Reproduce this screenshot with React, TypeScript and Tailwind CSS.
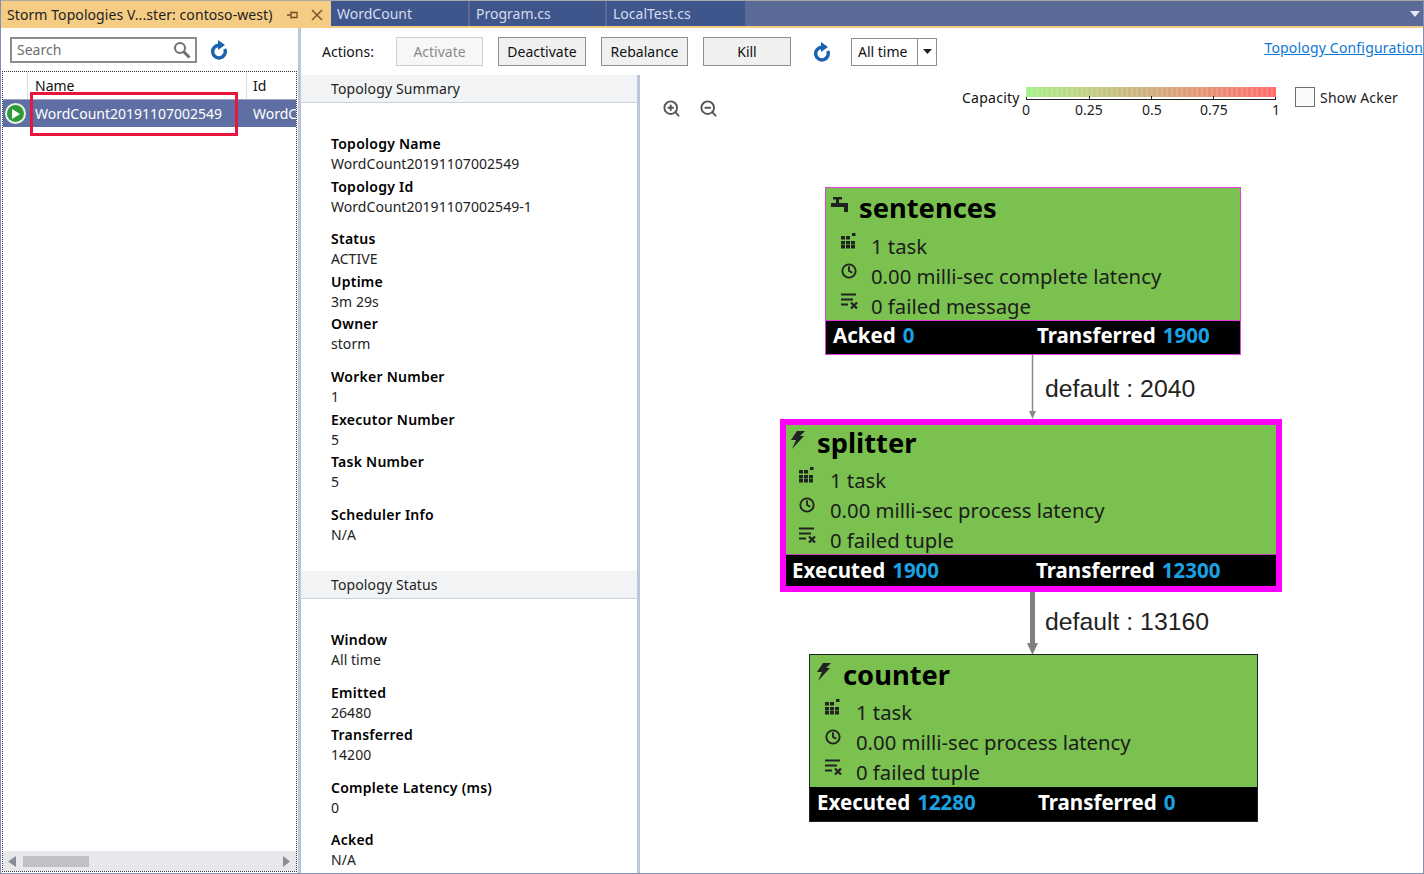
import React from "react";
import { Clock, ZoomIn, ZoomOut } from "lucide-react";

const Field = ({ label, value }: { label: string; value: string }) => (
  <div className="h-[42.6px] leading-5">
    <div className="font-semibold text-black tracking-[0.25px]">{label}</div>
    <div className="text-[#222] tracking-[0.05px]">{value}</div>
  </div>
);

const Group = ({ items }: { items: [string, string][] }) => (
  <div className="mb-[10px]">
    {items.map(([l, v]) => (
      <Field key={l} label={l} value={v} />
    ))}
  </div>
);

const SectionHead = ({ children }: { children: React.ReactNode }) => (
  <div className="h-[28px] pl-[30px] flex items-center bg-[#f2f3f5] border-b border-[#ccd2dc] text-[#222] tracking-[0.12px]">{children}</div>
);

const Faucet = () => (
  <svg width="18" height="15" viewBox="0 0 18 15" fill="#222" className="-mt-[7px]">
    <path d="M2 0h9v2.500H8V6h9v9h-4v-5H0V6h5V2.500H2z" />
  </svg>
);

const Bolt = () => (
  <svg width="14" height="18" viewBox="0 0 14 18" fill="#222" className="-mt-[7px]">
    <path d="M6 0h8L9 5h4L1 18l4-9H0z" />
  </svg>
);

const Tasks = () => (
  <svg width="15" height="16" viewBox="0 0 15 16" fill="#222">
    {[3, 8, 12].flatMap((y) =>
      [0, 5, 10].map((x) => (y === 3 && x === 10 ? null : <rect key={`${x}-${y}`} x={x} y={y} width="4" height="3.500" />)),
    )}
    <rect x="11" y="0" width="3.500" height="3" />
  </svg>
);

const FailIcon = () => (
  <svg width="18" height="16" viewBox="0 0 18 16" stroke="#222" strokeWidth="2" fill="none">
    <path d="M0 1.500h15M0 6.500h12M0 11.500h7" />
    <path d="M10 9.500l6 6M16 9.500l-6 6" strokeWidth="2.200" />
  </svg>
);

const Refresh = ({ className }: { className?: string }) => (
  <svg width="18" height="20" viewBox="0 0 18 20" fill="none" className={className}>
    <path d="M9 5.300A6.300 6.300 0 1 0 14.700 9" stroke="#1b62ad" strokeWidth="3.400" />
    <path d="M8 0l7 5-7 5z" fill="#1b62ad" />
  </svg>
);

type NodeProps = {
  box: string;
  inner: string;
  iconX: string;
  lineMt: string;
  indent: string;
  title: string;
  titleIcon: React.ReactNode;
  lines: string[];
  bar: string;
  leftLabel: string;
  leftValue: string;
  rightValue: string;
  leftW: string;
};

const GraphNode = ({ box, inner, iconX, lineMt, indent, title, titleIcon, lines, bar, leftLabel, leftValue, rightValue, leftW }: NodeProps) => (
  <div className={`absolute flex flex-col ${box}`}>
    <div className="flex-1 bg-[#7ac14f] relative min-h-0">
      <div className={inner}>
        <div className="flex items-center h-[36px]">
          <span className={`${iconX} flex`}>{titleIcon}</span>
          <span className="text-[27.300px] font-bold text-black leading-none">{title}</span>
        </div>
        <div className={`${lineMt} flex flex-col`}>
          {lines.map((t, i) => (
            <div key={t} className="flex items-center h-[30px] text-[20.300px] text-[#1c1c1c] whitespace-nowrap">
              <span className={`${indent} -mt-[10px] shrink-0 flex`}>
                {i === 0 ? <Tasks /> : i === 1 ? <Clock size={16} strokeWidth={2.8} color="#222" /> : <FailIcon />}
              </span>
              {t}
            </div>
          ))}
        </div>
      </div>
    </div>
    <div className={`${bar} shrink-0 bg-black flex items-center text-[20.500px] font-bold text-white whitespace-nowrap`}>
      <span className={`${leftW} flex gap-[7px]`}>
        {leftLabel} <span className="text-[#1ba1e2]">{leftValue}</span>
      </span>
      <span className="flex gap-[7px]">
        Transferred <span className="text-[#1ba1e2]">{rightValue}</span>
      </span>
    </div>
  </div>
);

export default function App() {
  return (
    <div className="w-[1424px] h-[874px] overflow-hidden flex flex-col bg-white border border-t-0 border-[#7f8fb5] text-[14px] font-['Noto_Sans','Open_Sans',sans-serif]">
      {/* Tab strip */}
      <div className="h-[28px] shrink-0 bg-[#5b6a97] border-t border-[#a9a9a9] border-b-[2px] border-b-[#f5cc84] flex text-[14px]">
        <div className="w-[330px] bg-[#f5cc84] flex items-center pl-[6px] text-[#1e1e1e] whitespace-nowrap -mb-[2px]">
          <span className="text-[14px] tracking-[0.08px]">Storm Topologies V...ster: contoso-west)</span>
          <svg className="ml-[14px]" width="12" height="12" viewBox="0 0 12 12" fill="none" stroke="#6b4f25" strokeWidth="1.300">
            <path d="M0 6h4M4 2.500v7M4 3.500h6v5H4" />
          </svg>
          <svg className="ml-[12px]" width="12" height="12" viewBox="0 0 12 12" stroke="#7a5a2a" strokeWidth="1.600">
            <path d="M1 1l10 10M11 1L1 11" />
          </svg>
        </div>
        {[
          ["WordCount", "w-[139px]"],
          ["Program.cs", "w-[137px]"],
          ["LocalTest.cs", "w-[140px]"],
        ].map(([t, w]) => (
          <div key={t} className={`${w} bg-[#3f568d] border-r-[2px] border-[#5b6a97] flex items-center pl-[6px] text-[#d5dcec]`}>
            {t}
          </div>
        ))}
        <div className="flex-1 flex items-center justify-end pr-[3px]">
          <svg width="10" height="6" viewBox="0 0 10 6" fill="#e6e9f2">
            <path d="M0 0h10L5 6z" />
          </svg>
        </div>
      </div>

      <div className="flex-1 flex min-h-0">
        {/* Left panel */}
        <div className="w-[297px] shrink-0 flex flex-col border-r-[3px] border-[#bcc7dd] box-content">
          <div className="h-[43px] shrink-0 flex items-center pl-[9px]">
            <div className="w-[187px] h-[26px] border-2 border-[#8c8c8c] flex items-center justify-between pl-[5px] pr-[4px] text-[#6e6e6e]">
              <span className="-mt-[1px]">Search</span>
              <svg width="18" height="18" viewBox="0 0 18 18" fill="none" stroke="#707070">
                <circle cx="7" cy="7" r="5" strokeWidth="2" />
                <path d="M10.500 10.500l6 6" strokeWidth="3" />
              </svg>
            </div>
            <Refresh className="ml-[13px]" />
          </div>
          <div className="flex-1 mx-[1px] mb-[1px] border border-dotted border-[#333] flex flex-col min-h-0 relative">
            <div className="h-[27px] shrink-0 flex items-end text-[#111] leading-[20px]">
              <div className="w-[25px] h-full border-r border-[#dcdcdc]" />
              <div className="w-[219px] h-full border-r border-[#dcdcdc] pl-[7px] pt-[4px]">Name</div>
              <div className="flex-1 h-full pl-[6px] pt-[4px]">Id</div>
            </div>
            <div className="h-[28px] shrink-0 bg-[#5f6fa3] border-t border-[#9aa5c4] flex items-center text-white overflow-hidden whitespace-nowrap">
              <div className="w-[25px] shrink-0 flex justify-center">
                <div className="w-[21px] h-[21px] rounded-full bg-[#e8f3e4] flex items-center justify-center">
                  <div className="w-[17px] h-[17px] rounded-full bg-[#2e9a3a] flex items-center justify-center">
                    <svg width="9" height="10" viewBox="0 0 9 10" fill="#fff">
                      <path d="M1 0l8 5-8 5z" />
                    </svg>
                  </div>
                </div>
              </div>
              <div className="w-[219px] shrink-0 pl-[7px]">WordCount20191107002549</div>
              <div className="pl-[6px]">WordCount</div>
            </div>
            <div className="absolute left-[27px] top-[20px] w-[208px] h-[44px] border-[3px] border-[#e8163c]" />
            <div className="flex-1" />
            <div className="h-[20px] shrink-0 bg-[#e8e8ec] flex items-center pl-[5px] pr-[6px]">
              <svg width="8" height="11" viewBox="0 0 8 11" fill="#8a8d96">
                <path d="M8 0v11L0 5.500z" />
              </svg>
              <div className="ml-[7px] w-[66px] h-[11px] bg-[#c0c1c6]" />
              <svg className="ml-auto" width="7" height="11" viewBox="0 0 7 11" fill="#8a8d96">
                <path d="M0 0v11l7-5.500z" />
              </svg>
            </div>
          </div>
        </div>

        {/* Right panel */}
        <div className="flex-1 min-w-0 flex flex-col">
          <div className="h-[47px] shrink-0 flex items-center pl-[21px] text-[14px]">
            <span className="w-[74px] text-[#111]">Actions:</span>
            <button className="w-[87px] h-[29px] border border-[#cfcfcf] bg-[#f7f7f7] text-[#8a8a8a]">Activate</button>
            <button className="w-[88px] h-[29px] ml-[15px] border border-[#8e8e8e] bg-[#f0f0f0] text-[#111]">Deactivate</button>
            <button className="w-[87px] h-[29px] ml-[15px] border border-[#8e8e8e] bg-[#f0f0f0] text-[#111]">Rebalance</button>
            <button className="w-[88px] h-[29px] ml-[15px] border border-[#8e8e8e] bg-[#f0f0f0] text-[#111]">Kill</button>
            <Refresh className="ml-[22px]" />
            <div className="ml-[20px] w-[86px] h-[28px] border border-[#8e8e8e] flex items-center">
              <span className="w-[65px] pl-[6px] text-[#111]">All time</span>
              <span className="flex-1 h-full border-l border-[#8e8e8e] flex items-center justify-center">
                <svg width="9" height="5" viewBox="0 0 9 5" fill="#222">
                  <path d="M0 0h9L4.500 5z" />
                </svg>
              </span>
            </div>
            <a className="ml-auto -mt-[8px] text-[#0a78d7] underline whitespace-nowrap tracking-[0.18px]">Topology Configuration</a>
          </div>

          <div className="flex-1 flex min-h-0">
            <div className="w-[336px] shrink-0 overflow-hidden text-[14px]">
              <SectionHead>Topology Summary</SectionHead>
              <div className="pl-[30px] pt-[31px] h-[468px]">
                <Group items={[["Topology Name", "WordCount20191107002549"], ["Topology Id", "WordCount20191107002549-1"]]} />
                <Group items={[["Status", "ACTIVE"], ["Uptime", "3m 29s"], ["Owner", "storm"]]} />
                <Group items={[["Worker Number", "1"], ["Executor Number", "5"], ["Task Number", "5"]]} />
                <Group items={[["Scheduler Info", "N/A"]]} />
              </div>
              <SectionHead>Topology Status</SectionHead>
              <div className="pl-[30px] pt-[31px]">
                <Group items={[["Window", "All time"]]} />
                <Group items={[["Emitted", "26480"], ["Transferred", "14200"]]} />
                <Group items={[["Complete Latency (ms)", "0"]]} />
                <Group items={[["Acked", "N/A"]]} />
              </div>
            </div>
            <div className="w-[3px] shrink-0 bg-[#bcc7dd]" />

            {/* Graph canvas */}
            <div className="flex-1 relative overflow-hidden">
              <ZoomIn size={19} strokeWidth={2.400} color="#555" className="absolute left-[22px] top-[24px]" />
              <ZoomOut size={19} strokeWidth={2.400} color="#555" className="absolute left-[59px] top-[24px]" />

              <span className="absolute left-[322px] top-[12px] text-[#111] tracking-[0.25px]">Capacity</span>
              <div className="absolute left-[386px] top-[12px] w-[250px]">
                <div className="h-[10px] bg-gradient-to-r from-[#a6f088] via-[#d0ad80] to-[#ff6a6a] relative">
                  <div className="absolute inset-0 bg-[repeating-linear-gradient(90deg,rgba(255,255,255,0.14)_0_2px,transparent_2px_5px)]" />
                </div>
                <div className="h-[3px] border border-t-0 border-[#222] relative">
                  <i className="absolute left-1/4 top-[-1px] w-px h-[3px] bg-[#222]" />
                  <i className="absolute left-1/2 top-[-1px] w-px h-[3px] bg-[#222]" />
                  <i className="absolute left-3/4 top-[-1px] w-px h-[3px] bg-[#222]" />
                </div>
              </div>
              {[
                ["0", "left-[382px]"],
                ["0.25", "left-[435px]"],
                ["0.5", "left-[502px]"],
                ["0.75", "left-[560px]"],
                ["1", "left-[632px]"],
              ].map(([t, p]) => (
                <span key={t} className={`absolute ${p} top-[25px] leading-5 text-[#222]`}>{t}</span>
              ))}
              <div className="absolute left-[655px] top-[12px] w-[20px] h-[20px] border border-[#707070] bg-[#fafafa]" />
              <span className="absolute left-[680px] top-[12px] text-[#222] tracking-[0.2px]">Show Acker</span>

              {/* Edges */}
              <svg className="absolute left-0 top-0" width="784" height="800" fill="none">
                <path d="M392.500 280V338" stroke="#8a8a8a" strokeWidth="1.500" />
                <path d="M389 336h7l-3.500 8z" fill="#8a8a8a" />
                <path d="M392.500 517V570" stroke="#808080" strokeWidth="5" />
                <path d="M387 568h11l-5.500 12z" fill="#808080" />
              </svg>
              <span className="absolute left-[405px] top-[298px] text-[24.800px] leading-8 text-[#222] font-['Liberation_Sans',sans-serif]">default : 2040</span>
              <span className="absolute left-[405px] top-[531px] text-[24.800px] leading-8 text-[#222] font-['Liberation_Sans',sans-serif]">default : 13160</span>

              <GraphNode
                box="left-[185px] top-[112px] w-[416px] h-[168px] border border-[#e040e0]"
                inner="pl-[5px] pt-[2px]"
                iconX="w-[28px]"
                lineMt="mt-[5px]"
                indent="ml-[10px] w-[30px]"
                title="sentences"
                titleIcon={<Faucet />}
                lines={["1 task", "0.00 milli-sec complete latency", "0 failed message"]}
                bar="h-[34px] border-t border-[#e040e0] pl-[7px] pb-[5px]"
                leftLabel="Acked"
                leftValue="0"
                rightValue="1900"
                leftW="w-[204px]"
              />
              <GraphNode
                box="left-[140px] top-[344px] w-[502px] h-[173px] border-[6px] border-[#ff00ff]"
                inner="pl-[5px]"
                iconX="w-[26px]"
                lineMt="mt-[4px]"
                indent="ml-[8px] w-[31px]"
                title="splitter"
                titleIcon={<Bolt />}
                lines={["1 task", "0.00 milli-sec process latency", "0 failed tuple"]}
                bar="h-[32px] border-t border-[#c040c0] pl-[6px] pb-[1px]"
                leftLabel="Executed"
                leftValue="1900"
                rightValue="12300"
                leftW="w-[244px]"
              />
              <GraphNode
                box="left-[169px] top-[579px] w-[449px] h-[168px] border border-[#222]"
                inner="pl-[7px] pt-[2px]"
                iconX="w-[26px]"
                lineMt="mt-[4px]"
                indent="ml-[8px] w-[31px]"
                title="counter"
                titleIcon={<Bolt />}
                lines={["1 task", "0.00 milli-sec process latency", "0 failed tuple"]}
                bar="h-[34px] pl-[7px] pb-[3px]"
                leftLabel="Executed"
                leftValue="12280"
                rightValue="0"
                leftW="w-[221px]"
              />
            </div>
          </div>
        </div>
      </div>
    </div>
  );
}
